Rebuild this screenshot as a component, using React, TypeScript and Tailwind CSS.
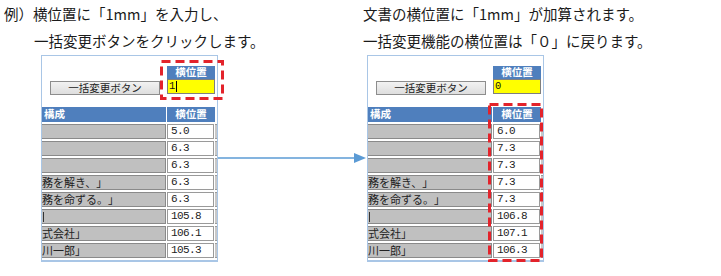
import React from "react";

type Row = { text?: React.ReactNode; value: string };

const jp = { fontFamily: '"Noto Sans CJK JP", "Noto Sans", sans-serif' };
const mono = { fontFamily: '"Liberation Mono", "DejaVu Sans Mono", monospace' };

function Dashed({ w, h }: { w: number; h: number }) {
  return (
    <svg width={w} height={h} className="block">
      <rect
        x={1.5}
        y={1.5}
        width={w - 3}
        height={h - 3}
        fill="none"
        stroke="#e3232b"
        strokeWidth={3}
        strokeDasharray="9 5"
      />
    </svg>
  );
}

function Panel({
  input,
  cursor,
  rows,
  dash,
}: {
  input: string;
  cursor?: boolean;
  rows: Row[];
  dash: "top" | "col";
}) {
  return (
    <div className="relative w-[177px] border border-b-2 border-[#a9c6e6] bg-white pb-[2px]">
      <div className="flex h-[51px] pt-[10px] pl-[8px]">
        <div
          className="mt-[15px] flex h-[14px] w-[110px] items-center justify-center border border-[#8d8d8d] bg-gradient-to-b from-[#f2f2f2] to-[#dedede] text-[10.5px] leading-none text-[#222]"
          style={jp}
        >
          一括変更ボタン
        </div>
        <div className="ml-[7px] flex w-[48px] flex-col">
          <div
            className="flex h-[13px] items-center justify-center bg-[#4f7fbd] text-[10.5px] font-bold leading-none text-white"
            style={jp}
          >
            横位置
          </div>
          <div
            className="flex h-[15px] items-center border border-[#7f7f7f] bg-[#ffff00] pl-[1px] text-[10.5px] leading-none text-[#111]"
            style={mono}
          >
            {input}
            {cursor && <span className="ml-[1px] inline-block h-[11px] w-[1px] bg-black" />}
          </div>
        </div>
      </div>
      <div className="flex h-[15px] gap-[1px]">
        <div
          className="flex w-[124px] items-center bg-[#4f7fbd] pl-[2px] text-[10.5px] font-bold leading-none text-white"
          style={jp}
        >
          構成
        </div>
        <div
          className="flex w-[48px] items-center justify-center bg-[#4f7fbd] text-[10.5px] font-bold leading-none text-white"
          style={jp}
        >
          横位置
        </div>
      </div>
      <div className="flex flex-col">
        {rows.map((r, i) => (
          <div key={i} className="mt-[2px] flex h-[15px] gap-[1px]">
            <div
              className="flex w-[124px] items-center overflow-hidden whitespace-nowrap border-y border-r border-[#8a8a8a] bg-[#c0c0c0] text-[11px] leading-none text-[#222]"
              style={jp}
            >
              {r.text}
            </div>
            <div
              className="flex w-[47px] items-center border border-[#9a9a9a] bg-white pl-[3px] text-[11px] leading-none tracking-[-0.6px] text-[#222]"
              style={mono}
            >
              {r.value}
            </div>
            <div className="w-[2px] border-y border-[#9a9a9a] bg-[#c8c8c8]" />
          </div>
        ))}
      </div>
      {dash === "top" ? (
        <div className="absolute left-[118px] top-[4px]">
          <Dashed w={64} h={40} />
        </div>
      ) : (
        <div className="absolute left-[120px] top-[47px]">
          <Dashed w={55} h={159} />
        </div>
      )}
    </div>
  );
}

function rowTexts(values: string[]): Row[] {
  const texts: React.ReactNode[] = [
    null,
    null,
    null,
    <span>務を解き、」</span>,
    <span>務を命ずる。」</span>,
    <span className="ml-[1px] inline-block h-[10px] w-[1px] bg-[#333]" />,
    <span>式会社」</span>,
    <span>川一郎」</span>,
  ];
  return values.map((v, i) => ({ text: texts[i], value: v }));
}

export default function App() {
  const left = rowTexts(["5.0", "6.3", "6.3", "6.3", "6.3", "105.8", "106.1", "105.3"]);
  const right = rowTexts(["6.0", "7.3", "7.3", "7.3", "7.3", "106.8", "107.1", "106.3"]);
  return (
    <div
      className="relative h-[276px] w-[721px] overflow-hidden bg-white text-[#1a1a1a] [text-spacing-trim:space-all]"
      style={jp}
    >
      <div className="flex">
        <div className="flex w-[363px] flex-col">
          <p className="whitespace-nowrap pl-[4px] text-[14.5px] leading-[27px]">例）横位置に「1mm」を入力し、</p>
          <p className="whitespace-nowrap pl-[34px] text-[14.5px] leading-[27px]">一括変更ボタンをクリックします。</p>
          <div className="ml-[41px] mt-[1px]">
            <Panel input="1" cursor rows={left} dash="top" />
          </div>
        </div>
        <div className="flex flex-col">
          <p className="whitespace-nowrap text-[14.5px] leading-[27px]">文書の横位置に「1mm」が加算されます。</p>
          <p className="whitespace-nowrap text-[14.5px] leading-[27px]">一括変更機能の横位置は「０」に戻ります。</p>
          <div className="ml-[4px] mt-[1px]">
            <Panel input="0" rows={right} dash="col" />
          </div>
        </div>
      </div>
      <svg className="absolute left-[218px] top-[152px]" width={150} height={12}>
        <line x1={0} y1={6} x2={138} y2={6} stroke="#5b9bd5" strokeWidth={1.5} />
        <polygon points="136,1 148,6 136,11" fill="#5b9bd5" />
      </svg>
    </div>
  );
}
